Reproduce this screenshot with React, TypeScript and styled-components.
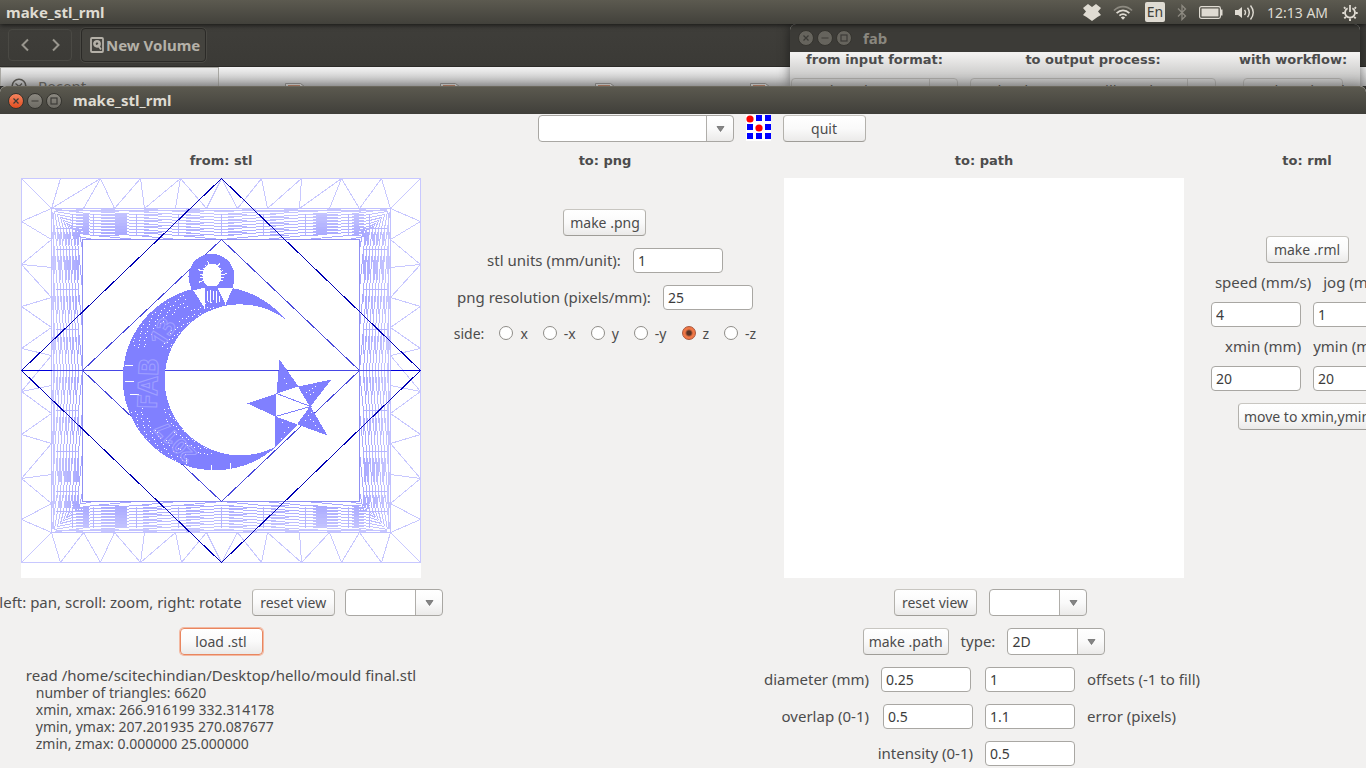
import React from "react";
import styled, { createGlobalStyle, css } from "styled-components";

const GlobalStyle = createGlobalStyle`
  *, *::before, *::after { box-sizing: border-box; }
  body { margin: 0; overflow: hidden; }
  button, input, select { font: inherit; color: inherit; margin: 0; }
`;

/* ---------- desktop shell ---------- */

const Desktop = styled.div`
  position: relative;
  height: 100vh;
  overflow: hidden;
  background: #3b3a36;
  color: #4c4c4c;
  font: 15px/17px "Noto Sans", "Open Sans", sans-serif;
`;

const Panel = styled.header`
  position: relative;
  z-index: 1;
  display: flex;
  align-items: center;
  justify-content: space-between;
  height: 24px;
  padding: 0 8px 0 6px;
  background: linear-gradient(#5c5a50, #42413b);
  box-shadow: 0 1px 5px rgba(0, 0, 0, 0.7);
  color: #dfdbd2;
`;

const PanelTitle = styled.span`
  font-weight: 700;
  line-height: 20px;
`;

const Tray = styled.div`
  display: flex;
  align-items: center;
  gap: 12px;
  svg { display: block; }
`;

const Clock = styled.time`
  width: 63px;
  font-size: 14px;
  white-space: nowrap;
`;

const Language = styled.span`
  width: 20px;
  height: 20px;
  border-radius: 2px;
  background: #dfdbd2;
  color: #42413b;
  font-size: 14px;
  line-height: 20px;
  text-align: center;
`;

const FileWindow = styled.section`
  position: absolute;
  top: 24px;
  left: 0;
  right: 0;
  height: 62px;
`;

const FileToolbar = styled.div`
  display: flex;
  align-items: center;
  gap: 9px;
  height: 43px;
  padding: 0 8px;
  background: linear-gradient(#3f3e3a, #3b3a36);
  border-bottom: 1px solid #2c2b28;
`;

const NavGroup = styled.div`
  display: flex;
  height: 32px;
  border: 1px solid #4a4944;
  border-radius: 4px;
`;

const NavButton = styled.button`
  display: grid;
  place-items: center;
  width: 31px;
  padding: 0;
  border: 0;
  background: none;
`;

const PathButton = styled.button`
  display: flex;
  align-items: center;
  gap: 2px;
  height: 34px;
  padding: 0 5px 0 8px;
  border: 1px solid #2b2a27;
  border-radius: 4px;
  outline: 1px solid #4a4944;
  background: #44433e;
  color: #b5b1a8;
  font-weight: 700;
`;

const FileBody = styled.div`
  display: flex;
  height: 19px;
  overflow: hidden;
  background: linear-gradient(#f3f3f3, #bcbcbc);
`;

const Places = styled.div`
  display: flex;
  gap: 11px;
  width: 219px;
  padding: 10px 0 0 10px;
  overflow: hidden;
  border: 1px solid #a9a8a3;
  border-bottom: 0;
  background: linear-gradient(#eaeaea, #b8b8b8);
  color: #6b6964;
  svg { flex: none; }
`;

const Files = styled.div`
  display: flex;
  gap: 134px;
  padding: 16px 0 0 66px;
  svg { flex: none; }
`;

const FabWindow = styled.section`
  position: absolute;
  top: 24px;
  left: 790px;
  right: 6px;
  height: 62px;
  overflow: hidden;
  border-radius: 6px 6px 0 0;
  background: linear-gradient(#f2f1f0 30px, #b9b9b8);
  box-shadow: 0 0 12px rgba(0, 0, 0, 0.5);
`;

const TitleBar = styled.div<{ $active?: boolean }>`
  display: flex;
  align-items: center;
  height: 28px;
  padding-left: 8px;
  color: #8a877f;
  background: #3c3b37;
  font-weight: 700;
  ${(p) =>
    p.$active &&
    css`
      color: #dfdbd2;
      border-top: 1px solid #6a675c;
      border-radius: 6px 6px 0 0;
      background: linear-gradient(#5b594f, #403f3a);
    `}
`;

const Controls = styled.div`
  display: flex;
  gap: 3px;
  margin-right: 11px;
`;

const Control = styled.button<{ $tone: "close" | "idle" | "dim" }>`
  display: grid;
  place-items: center;
  width: 16px;
  height: 16px;
  padding: 0;
  border: 1px solid #35342f;
  border-radius: 50%;
  color: #3c3b37;
  background: ${(p) =>
    p.$tone === "close"
      ? "linear-gradient(#f58560, #e14d20)"
      : p.$tone === "idle"
      ? "linear-gradient(#8b8880, #6d6b64)"
      : "#66645d"};
`;

const FabColumns = styled.div`
  display: flex;
  gap: 12px;
  padding: 0 13px 0 1px;
  > :last-child { margin-left: auto; }
`;

const FabColumn = styled.div<{ $width: number }>`
  display: flex;
  flex-direction: column;
  align-items: center;
  gap: 10px;
  width: ${(p) => p.$width}px;
`;

const FabField = styled.div<{ $divider?: boolean; $width: number }>`
  width: ${(p) => p.$width}px;
  height: 27px;
  padding-left: 8px;
  border: 1px solid #a9a8a5;
  border-radius: 4px;
  color: #5a5955;
  line-height: 23px;
  white-space: nowrap;
  ${(p) =>
    p.$divider &&
    css`
      background: linear-gradient(#a9a8a5, #a9a8a5) right 27px top / 1px 100% no-repeat;
    `}
`;

/* ---------- application window ---------- */

const AppWindow = styled.main`
  position: absolute;
  top: 86px;
  left: 0;
  right: 0;
  bottom: 0;
  overflow: hidden;
  border-radius: 6px 6px 0 0;
  background: #f2f1f0;
  box-shadow: 0 -1px 12px rgba(0, 0, 0, 0.4);
`;

const Content = styled.div`
  width: max-content;
`;

const Toolbar = styled.div`
  display: flex;
  align-items: flex-start;
  justify-content: center;
  gap: 12px;
  padding-top: 1px;
`;

const Stages = styled.div`
  display: grid;
  grid-template-columns: 442px 304px 432px 192px;
  column-gap: 11px;
  margin-top: 9px;
`;

const Stage = styled.section`
  display: flex;
  flex-direction: column;
  align-items: center;
`;

const Heading = styled.h2`
  margin: 0;
  font: 700 13px/20px "DejaVu Sans", sans-serif;
  white-space: nowrap;
`;

const FabHeading = styled(Heading)`
  line-height: 16px;
`;

const StageBody = styled.div<{ $top: number }>`
  display: flex;
  flex-direction: column;
  align-items: center;
  gap: 12px;
  padding-top: ${(p) => p.$top}px;
`;

const Row = styled.div<{ $height?: number; $indent?: number; $gap?: number }>`
  display: flex;
  align-items: center;
  justify-content: center;
  gap: ${(p) => p.$gap ?? 12}px;
  height: ${(p) => (p.$height ? `${p.$height}px` : "auto")};
  padding-left: ${(p) => p.$indent ?? 0}px;
  white-space: nowrap;
`;

const Viewport = styled.div`
  width: 400px;
  height: 400px;
  margin: 7px 0 11px;
  background: #fff;
  svg { display: block; }
`;

const Button = styled.button<{ $width?: number; $focused?: boolean }>`
  width: ${(p) => p.$width ?? 83}px;
  height: 27px;
  padding: 0;
  border: 1px solid #b3b1ac;
  border-top-color: #c8c6c1;
  border-bottom-color: #9f9d98;
  border-radius: 4px;
  background: linear-gradient(#fff, #fafafa 50%, #ebeae9);
  font-size: 14px;
  line-height: 24px;
  white-space: nowrap;
  ${(p) =>
    p.$focused &&
    css`
      border-color: #e9865f;
      box-shadow: 0 0 0 1px #f3b9a2;
    `}
`;

const Entry = styled.input<{ $end?: boolean }>`
  width: 90px;
  height: 25px;
  padding: 0 4px;
  border: 1px solid #a9a7a3;
  border-radius: 4px;
  background: #fff;
  color: #3c3c3c;
  font-size: 14px;
  justify-self: ${(p) => (p.$end ? "end" : "start")};
`;

const Combo = styled.div<{ $width: number }>`
  position: relative;
  width: ${(p) => p.$width}px;
  height: 27px;
  svg {
    position: absolute;
    top: 11px;
    right: 9px;
    pointer-events: none;
  }
`;

const Select = styled.select`
  appearance: none;
  display: block;
  width: 100%;
  height: 100%;
  padding: 0 30px 0 4px;
  border: 1px solid #a9a7a3;
  border-radius: 4px;
  color: #3c3c3c;
  font-size: 14px;
  background:
    linear-gradient(#b0aeaa, #b0aeaa) right 26px top / 1px 100% no-repeat,
    linear-gradient(#fff, #fafafa 50%, #ebeae9) right top / 26px 100% no-repeat,
    #fff;
`;

const Radios = styled.div`
  display: flex;
  align-items: center;
  gap: 15px;
  height: 22px;
  font-size: 14px;
`;

const RadioLabel = styled.label`
  display: flex;
  align-items: center;
  gap: 7px;
`;

const Radio = styled.input`
  appearance: none;
  width: 14px;
  height: 14px;
  border: 1px solid #8f8d88;
  border-radius: 50%;
  background: #fff;
  &:checked {
    border-color: #a8553a;
    background: radial-gradient(circle, #5a3325 0 2px, #f07746 4px);
  }
`;

const Fields = styled.div`
  display: grid;
  grid-template-columns: 101px 92px 90px 113px;
  gap: 12px;
  align-items: center;
  white-space: nowrap;
`;

const FieldLabel = styled.label<{ $right?: boolean; $wide?: boolean }>`
  display: flex;
  justify-content: ${(p) => (p.$right ? "flex-end" : "flex-start")};
  grid-column: ${(p) => (p.$wide ? "1 / 3" : "auto")};
`;

const Report = styled.div`
  white-space: nowrap;
`;

const Detail = styled.span`
  display: block;
  padding-left: 10px;
  font-size: 14px;
`;

/* ---------- drawings ---------- */

const ControlGlyph = ({ kind }: { kind: "close" | "min" | "max" }) => (
  <svg width="14" height="14" viewBox="0 0 14 14" fill="none" stroke="currentColor" strokeWidth="1.2">
    {kind === "close" && <path d="M4.5 4.5l5 5M9.5 4.5l-5 5" />}
    {kind === "min" && <path d="M3.5 7h7" />}
    {kind === "max" && <rect x="4" y="4" width="6" height="6" />}
  </svg>
);

const WindowControls = ({ dim }: { dim?: boolean }) => (
  <Controls>
    <Control $tone={dim ? "dim" : "close"} aria-label="Close"><ControlGlyph kind="close" /></Control>
    <Control $tone={dim ? "dim" : "idle"} aria-label="Minimize"><ControlGlyph kind="min" /></Control>
    <Control $tone={dim ? "dim" : "idle"} aria-label="Maximize"><ControlGlyph kind="max" /></Control>
  </Controls>
);

const DropboxIcon = () => (
  <svg width="18" height="17" viewBox="0 0 18 17" fill="#dfdbd2">
    <path d="M5 0l4 3 4-3 5 4-3 3.500 3 3.500-3.500 2L9 17l-5.500-4L0 11l3-3.500L0 4z" />
  </svg>
);

const WifiIcon = () => (
  <svg width="20" height="15" viewBox="0 0 20 15" fill="none" strokeWidth="1.700">
    <path d="M1 5.500C6 .200 14 .200 19 5.500" stroke="#8d8a81" />
    <path d="M3.600 8.100c3.700-3.700 9.100-3.700 12.800 0M6.400 10.700c2.100-2 5.100-2 7.200 0" stroke="#dfdbd2" />
    <path d="M10 14.800l-2.200-2.300a3.200 3.200 0 0 1 4.400 0z" fill="#dfdbd2" />
  </svg>
);

const BluetoothIcon = () => (
  <svg width="10" height="17" viewBox="0 0 10 17" fill="none" stroke="#8d8a81" strokeWidth="1.300">
    <path d="M1 4.500l7.500 7.500L5 15.500v-14L8.500 5 1 12.500" />
  </svg>
);

const BatteryIcon = () => (
  <svg width="24" height="13" viewBox="0 0 24 13">
    <rect x=".6" y=".6" width="20.800" height="11.800" rx="1.800" fill="none" stroke="#dfdbd2" strokeWidth="1.200" />
    <rect x="2.500" y="2.500" width="17" height="8" fill="#dfdbd2" />
    <path d="M22 3.500h1.500v6H22z" fill="#dfdbd2" />
  </svg>
);

const SoundIcon = () => (
  <svg width="20" height="17" viewBox="0 0 20 17" fill="none" stroke="#dfdbd2" strokeWidth="1.400">
    <path d="M0 6h3.200L7 3v11l-3.800-3H0z" fill="#dfdbd2" stroke="none" />
    <path d="M9.500 6q2 2.500 0 5M12.500 3.800q3.600 4.700 0 9.400M15.500 1.500q5.500 7 0 14" />
  </svg>
);

const PowerIcon = () => (
  <svg width="16" height="17" viewBox="0 0 16 17" fill="none" stroke="#dfdbd2">
    <path d="M5.600 4.300a5 5 0 1 0 4.800 0" strokeWidth="1.800" />
    <path d="M8 1v7" strokeWidth="1.800" />
    <path d="M3.400 4.600L2 3.200M12.600 4.600L14 3.200M2.500 9H.3M13.500 9h2.200M3.900 12.800l-1.600 1.600M12.100 12.800l1.600 1.600M8 14.500V17" strokeWidth="1.900" />
  </svg>
);

const Chevron = ({ flip }: { flip?: boolean }) => (
  <svg width="8" height="14" viewBox="0 0 8 14" fill="none" stroke="#99968e" strokeWidth="2">
    <path d={flip ? "M1 1.500L6.500 7 1 12.500" : "M7 1.500L1.500 7 7 12.500"} />
  </svg>
);

const DriveIcon = () => (
  <svg width="14" height="16" viewBox="0 0 14 16" fill="none" stroke="#b5b1a8" strokeWidth="1.800">
    <rect x="1" y="1" width="12" height="14" rx="1" />
    <circle cx="7" cy="6.800" r="2.600" strokeWidth="2.600" />
    <path d="M7.500 7.500l3.500 5" />
  </svg>
);

const RecentIcon = () => (
  <svg width="16" height="16" viewBox="0 0 16 16" fill="none" stroke="#5c5a55" strokeWidth="1.600">
    <circle cx="8" cy="8" r="6.800" />
    <path d="M4.500 5.500l3.500 3 3-3" strokeWidth="1.200" />
  </svg>
);

const FileTop = () => (
  <svg width="21" height="6" viewBox="0 0 21 6" fill="#d9d8d6" stroke="#92918f">
    <path d="M.5 6V.5h15L20 4v2" />
    <path d="M3 2.500h12" stroke="#c08a70" />
  </svg>
);

const Arrow = () => (
  <svg width="9" height="6" viewBox="0 0 9 6">
    <path d="M1 .500h7L4.500 5.500z" fill="#858585" stroke="#6e6e6e" strokeWidth=".8" />
  </svg>
);

const steps = [0, 1, 2];

const FabLogo = () => (
  <svg width="25" height="26" viewBox="0 0 25 26">
    <rect width="25" height="26" fill="#fff" />
    {steps.map((r) =>
      steps.map((c) =>
        r === c && r < 2 ? (
          <circle key={`${r}${c}`} cx={4 + c * 9} cy={4 + r * 9} r="3.600" fill="#f00" />
        ) : (
          <rect key={`${r}${c}`} x={1 + c * 9} y={r * 9} width="6" height="6" fill="#00f" />
        )
      )
    )}
  </svg>
);

/* Wireframe of the mould: [outer, inner] vertex pairs of the triangle strips. */
const topLinks = [[0, 30], [39, 30], [79, 30], [79, 62], [79, 93], [119, 93], [119, 123], [159, 123], [159, 154], [159, 185], [200, 185], [200, 216], [240, 216], [240, 246], [280, 246], [280, 278], [320, 278], [320, 308], [320, 338], [360, 338], [360, 369], [399, 369]];
const bottomLinks = [[0, 30], [39, 30], [39, 62], [79, 62], [79, 93], [119, 93], [119, 123], [119, 154], [160, 154], [160, 185], [200, 185], [200, 216], [240, 216], [240, 246], [280, 246], [280, 278], [280, 308], [320, 308], [320, 338], [360, 338], [360, 369], [399, 369]];
const sideLinks = [[43, 30], [43, 61], [86, 61], [86, 89], [86, 119], [128, 119], [128, 149], [170, 149], [170, 177], [213, 177], [213, 207], [213, 235], [256, 235], [256, 265], [300, 265], [300, 296], [300, 325], [341, 325], [341, 354]];

const outerMesh =
  topLinks.map(([a, b]) => `M${a} 0L${b} 30`).join("") +
  bottomLinks.map(([a, b]) => `M${a} 384L${b} 354`).join("") +
  sideLinks.map(([a, b]) => `M0 ${a}L30 ${b}M399 ${a}L369 ${b}`).join("");

const rings = [30, 33, 36, 39, 42, 45, 48, 51, 54, 57, 61];
const columns = [51, 72, 115, 157, 200, 242, 284, 327, 348];
const rows = [50, 71, 111, 151, 192, 232, 273, 313, 333];
const W = 399;
const H = 384;

const bandPath = (k: number) => {
  const a = rings[k];
  const b = rings[k + 1];
  let d = "";
  for (let i = 0; i < columns.length - 1; i++) {
    const [x1, x2] = i < 4 ? [columns[i], columns[i + 1]] : [columns[i + 1], columns[i]];
    d += `M${x1} ${a}L${x2} ${b}M${x1} ${H - a}L${x2} ${H - b}`;
    const [y1, y2] = i < 4 ? [rows[i], rows[i + 1]] : [rows[i + 1], rows[i]];
    d += `M${a} ${y1}L${b} ${y2}M${W - a} ${y1}L${W - b} ${y2}`;
  }
  const m = (a + b) / 2;
  d += `M${a} ${a}L${columns[0]} ${b}M${W - a} ${a}L${columns[8]} ${b}M${a} ${H - a}L${columns[0]} ${H - b}M${W - a} ${H - a}L${columns[8]} ${H - b}`;
  d += `M${a} ${a}L${b} ${rows[0]}M${W - a} ${a}L${W - b} ${rows[0]}M${a} ${H - a}L${b} ${rows[8]}M${W - a} ${H - a}L${W - b} ${rows[8]}`;
  /* short runs where neighbouring facets close up */
  if (k > 1 && k < 9) {
    [[columns[1] + 11, 22], [W - columns[1] - 33, 22], [57, 10], [W - 67, 10]].forEach(([x, w]) => {
      d += `M${x} ${a}h${w}M${x} ${a + 1}h${w}M${x} ${H - a}h${w}M${x} ${H - a - 1}h${w}`;
    });
    if (k % 3) {
      [[81, 20], [H - 101, 20], [55, 11], [H - 66, 11]].forEach(([y, h]) => {
        d += `M${m} ${y}v${h}M${m + 1} ${y}v${h}M${W - m} ${y}v${h}M${W - m - 1} ${y}v${h}`;
      });
    }
  }
  return d;
};

const ringDash = (a: number, k: number) => {
  let d = "";
  for (let i = 0; i < columns.length - 1; i++) {
    const share = (i + k) % 2 ? 0.6 : 0.3;
    const x = columns[i];
    const w = (columns[i + 1] - x) * share;
    d += `M${x} ${a}h${w}M${x} ${H - a}h${w}`;
    const y = rows[i];
    const h = (rows[i + 1] - y) * share;
    d += `M${a} ${y}v${h}M${W - a} ${y}v${h}`;
  }
  return d;
};

const ribs =
  columns.map((x) => `M${x} 35V56M${x} ${H - 35}V${H - 56}`).join("") +
  rows.map((y) => `M34 ${y}H57M${W - 34} ${y}H${W - 57}`).join("");

const shade = (k: number) => {
  const v = Math.round(200 - k * 3.6);
  return `rgb(${v},${v},255)`;
};

/* Pinholes that the dense facets leave open along both rims of the crescent. */
const pinholes = (() => {
  let d = "";
  for (let i = 0; i < 46; i++) {
    for (let j = 0; j < 6; j++) {
      const side = i % 2 ? 1 : -1;
      const angle = Math.PI + side * (0.38 + (i / 46) * 0.85);
      const outer = (i * 7 + j * 3) % 5;
      if (outer > 1) continue;
      const r = 90 - j * 2.4;
      d += `M${Math.round(192.5 + r * Math.cos(angle))} ${Math.round(201 + r * Math.sin(angle))}h1`;
      if (j < 4) {
        const q = 77 + j * 2.4;
        d += `M${Math.round(218 + q * Math.cos(angle))} ${Math.round(201 + q * Math.sin(angle))}h1`;
      }
    }
  }
  return d;
})();

const loopSpokes = (() => {
  let d = "";
  for (let i = 0; i < 15; i++) {
    const t = Math.PI * 0.85 + (i / 14) * Math.PI * 1.3;
    const r = i % 3 ? 12 : 15;
    d += `M${190.5 + 8 * Math.cos(t)} ${97 + 10 * Math.sin(t)}L${190.5 + r * Math.cos(t)} ${97 + r * Math.sin(t)}`;
  }
  return d;
})();

const MouldMesh = () => (
  <svg width="400" height="400" viewBox="0 0 400 400" fill="none" shapeRendering="crispEdges" role="img" aria-label="mould wireframe">
    <g transform="translate(.5 .5)">
      <path d={outerMesh} stroke="#c8c8ff" />
      <rect width={W} height={H} stroke="#c8c8ff" />
      {rings.slice(0, -1).map((a, k) => (
        <path key={a} d={bandPath(k)} stroke={shade(k)} />
      ))}
      {rings.slice(1, -1).map((a, k) => (
        <path key={a} d={ringDash(a, k)} stroke={shade(k)} />
      ))}
      <path d={ribs} stroke="#b4b4ff" />
      <rect x="30" y="30" width="339" height="324" stroke="#c0c0ff" />
      <path d="M32 34V350M34 32H365M367 34V350M34 352H365" stroke="#c4c4ff" />
      <rect x="61" y="61" width="277" height="262" stroke="#9090f4" />
      <path d="M61 192L200 61L338 192L200 323Z" stroke="#4a4adc" />
      <path d="M0 192L200 0L399 192L200 384Z" stroke="#0000b4" />
      <path d="M0 192H399" stroke="#4646e6" />
      <path d="M0 192H30M369 192H399" stroke="#0000dc" />

      <path d="M264 141A92 92 0 1 0 256 267A75.500 75.500 0 1 1 264 141Z" fill="#8080ff" />
      <path
        fillRule="evenodd"
        d="M167.500 103A23 23 0 1 1 212.500 103L211 111H170ZM190.500 85A9.500 12 0 1 0 190.500 109A9.500 12 0 1 0 190.500 85Z"
        fill="#8080ff"
      />
      <path d="M172 112L183 109L184 131ZM196 109L211 110L204 126Z" fill="#fff" />
      <path d="M186 112v10M189 111v13M192 112v9M195 112v12M198 117v6" stroke="#fff" />
      <path d="M182 109H211" stroke="#8080ff" />
      <path d={loopSpokes} stroke="#fff" />
      <path d={pinholes} stroke="#fff" />
      <path d="M103 187h8M103 203h9M108 216h9M190 286v7M209 284v8M165 279v6" stroke="#fff" />

      <g fill="none" stroke="#a0a0ff" strokeWidth="1" fontFamily="Noto Sans, sans-serif" fontWeight="700">
        <text transform="translate(135 231) rotate(-88)" fontSize="27">FAB</text>
        <text transform="translate(141 170) rotate(-58)" fontSize="24">13</text>
        <text transform="translate(176 275) rotate(-135)" fontSize="21">2017</text>
      </g>

      <path
        d="M258 181L277 208L310 201L289 228L306 257L276 246L253 269L254 238L226 225L255 215Z"
        fill="#8080ff"
      />
      <path d="M255 215L277 208L289 228L276 246L254 238Z" fill="#fff" />
      <path d="M255 215L289 228L254 238M277 208L289 228L276 246" stroke="#8080ff" />
      <path d="M284 214h1M287 212h1M290 210h1M293 208h1M288 216h1M291 214h1M286 237h1M288 241h1M291 243h1M293 247h1M283 242h1M296 250h1M289 234h1M262 200h1M264 205h1M260 244h1M266 249h1M262 254h1M259 260h1" stroke="#fff" />
    </g>
  </svg>
);

const ComboBox = ({ label, width, value, id }: { label?: string; width: number; value?: string; id?: string }) => (
  <Combo $width={width}>
    <Select id={id} aria-label={label} defaultValue={value ?? ""}>
      <option value={value ?? ""}>{value ?? ""}</option>
    </Select>
    <Arrow />
  </Combo>
);

const sides = ["x", "-x", "y", "-y", "z", "-z"];

export default function App() {
  return (
    <>
      <GlobalStyle />
      <Desktop>
        <Panel>
          <PanelTitle>make_stl_rml</PanelTitle>
          <Tray>
            <DropboxIcon />
            <WifiIcon />
            <Language>En</Language>
            <BluetoothIcon />
            <BatteryIcon />
            <SoundIcon />
            <Clock>12:13 AM</Clock>
            <PowerIcon />
          </Tray>
        </Panel>

        <FileWindow>
          <FileToolbar>
            <NavGroup>
              <NavButton aria-label="Back"><Chevron /></NavButton>
              <NavButton aria-label="Forward"><Chevron flip /></NavButton>
            </NavGroup>
            <PathButton><DriveIcon />New Volume</PathButton>
          </FileToolbar>
          <FileBody>
            <Places><RecentIcon />Recent</Places>
            <Files><FileTop /><FileTop /><FileTop /><FileTop /></Files>
          </FileBody>
        </FileWindow>

        <FabWindow>
          <TitleBar><WindowControls dim />fab</TitleBar>
          <FabColumns>
            <FabColumn $width={167}>
              <FabHeading>from input format:</FabHeading>
              <FabField $divider $width={167}>mesh (.stl)</FabField>
            </FabColumn>
            <FabColumn $width={246}>
              <FabHeading>to output process:</FabHeading>
              <FabField $divider $width={246}>Roland MDX-20 mill (.rml)</FabField>
            </FabColumn>
            <FabColumn $width={108}>
              <FabHeading>with workflow:</FabHeading>
              <FabField $width={100}>make_stl_rml</FabField>
            </FabColumn>
          </FabColumns>
        </FabWindow>

        <AppWindow>
          <TitleBar $active><WindowControls />make_stl_rml</TitleBar>
          <Content>
            <Toolbar>
              <ComboBox label="preset" width={196} />
              <FabLogo />
              <Button>quit</Button>
            </Toolbar>

            <Stages>
              <Stage>
                <Heading>from: stl</Heading>
                <Viewport><MouldMesh /></Viewport>
                <StageBody $top={0}>
                  <Row $gap={10}>
                    <span>left: pan, scroll: zoom, right: rotate</span>
                    <Button>reset view</Button>
                    <ComboBox label="stl view" width={98} />
                  </Row>
                  <Button $focused>load .stl</Button>
                  <Report>
                    read /home/scitechindian/Desktop/hello/mould final.stl
                    <Detail>number of triangles: 6620</Detail>
                    <Detail>xmin, xmax: 266.916199 332.314178</Detail>
                    <Detail>ymin, ymax: 207.201935 270.087677</Detail>
                    <Detail>zmin, zmax: 0.000000 25.000000</Detail>
                  </Report>
                </StageBody>
              </Stage>

              <Stage>
                <Heading>to: png</Heading>
                <StageBody $top={38}>
                  <Button>make .png</Button>
                  <Row>
                    <label htmlFor="units">stl units (mm/unit):</label>
                    <Entry id="units" defaultValue="1" />
                  </Row>
                  <Row>
                    <label htmlFor="resolution">png resolution (pixels/mm):</label>
                    <Entry id="resolution" defaultValue="25" />
                  </Row>
                  <Radios role="radiogroup" aria-labelledby="side">
                    <span id="side">side:</span>
                    {sides.map((s) => (
                      <RadioLabel key={s}>
                        <Radio type="radio" name="side" value={s} defaultChecked={s === "z"} />
                        {s}
                      </RadioLabel>
                    ))}
                  </Radios>
                </StageBody>
              </Stage>

              <Stage>
                <Heading>to: path</Heading>
                <Viewport />
                <StageBody $top={0}>
                  <Row $indent={12}>
                    <Button>reset view</Button>
                    <ComboBox label="path view" width={98} />
                  </Row>
                  <Row>
                    <Button $width={86}>make .path</Button>
                    <label htmlFor="type">type:</label>
                    <ComboBox id="type" width={98} value="2D" />
                  </Row>
                  <Fields>
                    <FieldLabel $right htmlFor="diameter">diameter (mm)</FieldLabel>
                    <Entry id="diameter" defaultValue="0.25" />
                    <Entry id="offsets" defaultValue="1" />
                    <FieldLabel htmlFor="offsets">offsets (-1 to fill)</FieldLabel>
                    <FieldLabel $right htmlFor="overlap">overlap (0-1)</FieldLabel>
                    <Entry $end id="overlap" defaultValue="0.5" />
                    <Entry id="error" defaultValue="1.1" />
                    <FieldLabel htmlFor="error">error (pixels)</FieldLabel>
                    <FieldLabel $right $wide htmlFor="intensity">intensity (0-1)</FieldLabel>
                    <Entry id="intensity" defaultValue="0.5" />
                  </Fields>
                </StageBody>
              </Stage>

              <Stage>
                <Heading>to: rml</Heading>
                <StageBody $top={65}>
                  <Button>make .rml</Button>
                  <Row $height={15}>
                    <label htmlFor="speed">speed (mm/s)</label>
                    <label htmlFor="jog">jog (mm/s)</label>
                  </Row>
                  <Row>
                    <Entry id="speed" defaultValue="4" />
                    <Entry id="jog" defaultValue="1" />
                  </Row>
                  <Row $height={15}>
                    <label htmlFor="xmin">xmin (mm)</label>
                    <label htmlFor="ymin">ymin (mm)</label>
                  </Row>
                  <Row>
                    <Entry id="xmin" defaultValue="20" />
                    <Entry id="ymin" defaultValue="20" />
                  </Row>
                  <Button $width={139}>move to xmin,ymin</Button>
                </StageBody>
              </Stage>
            </Stages>
          </Content>
        </AppWindow>
      </Desktop>
    </>
  );
}
